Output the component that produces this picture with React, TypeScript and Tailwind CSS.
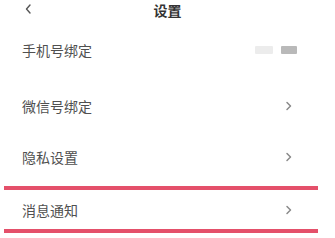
import React from "react";

const Chevron = () => (
  <svg width="8" height="12" viewBox="0 0 8 12" fill="none" className="block">
    <path d="M2 2.5 L5.5 6 L2 9.5" stroke="#8a8a8a" strokeWidth="1.5" strokeLinecap="round" strokeLinejoin="round" />
  </svg>
);

const Row = ({ label, h, right }: { label: string; h: string; right?: React.ReactNode }) => (
  <div className={`flex items-center justify-between pl-[22px] pr-[42px] ${h}`}>
    <span className="text-[14px] text-[#505050] leading-none">{label}</span>
    {right ?? <Chevron />}
  </div>
);

export default function App() {
  return (
    <div
      className="w-[335px] h-[238px] bg-white overflow-hidden"
      style={{ fontFamily: '"Noto Sans CJK SC", "Noto Sans", sans-serif' }}
    >
      <div className="relative flex items-center justify-center h-[20px]">
        <svg width="8" height="12" viewBox="0 0 8 12" fill="none" className="absolute left-[24px] top-[3px]">
          <path d="M6 2 L2.5 6 L6 10" stroke="#555" strokeWidth="1.4" strokeLinecap="round" strokeLinejoin="round" />
        </svg>
        <span className="text-[14px] font-bold text-[#333333] leading-none">设置</span>
      </div>
      <Row
        label="手机号绑定"
        h="h-[60px]"
        right={
          <div className="flex items-center gap-[8px] mr-[-4px]">
            <div className="w-[18px] h-[8px] bg-[#ececec] rounded-[1px]" />
            <div className="w-[16px] h-[8px] bg-[#b9b9b9] rounded-[1px]" />
          </div>
        }
      />
      <Row label="微信号绑定" h="h-[52px]" />
      <Row label="隐私设置" h="h-[50px]" />
      <div className="mt-[4px] ml-[4px] w-[314px] h-[4px] bg-[#e4506a]" />
      <Row label="消息通知" h="h-[39px]" />
      <div className="ml-[4px] w-[314px] h-[4px] bg-[#e4506a]" />
    </div>
  );
}
